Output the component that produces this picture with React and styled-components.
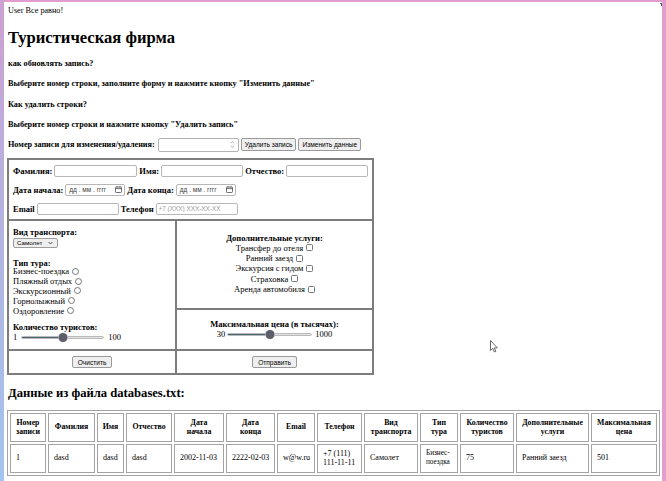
import React from 'react';
import styled, { createGlobalStyle } from 'styled-components';

const Global = createGlobalStyle`
  html, body { margin: 0; padding: 0; }
  body {
    width: 666px; height: 481px; overflow: hidden;
    font-family: "Liberation Serif", "Times New Roman", serif;
    color: #000;
  }
`;

const Desktop = styled.div`
  position: relative;
  width: 666px; height: 481px; box-sizing: border-box;
  padding: 2px 4px 0 4px;
  background:
    linear-gradient(to bottom, #cda0d2 0%, #b4b3e0 45%, #a2c4ee 100%) left top / 4px 100% no-repeat,
    #e29ccf;
`;

const Window = styled.div`
  position: relative;
  background: #fff;
  height: 100%;
  box-sizing: border-box;
  padding: 4px 3px 0 3px;
  overflow: hidden;
`;

const Grip = styled.span`
  position: absolute; right: 0; top: 1px;
  width: 3px; height: 3px;
  background: linear-gradient(225deg, #4a5a6a 0 50%, transparent 50%);
`;

const UserLine = styled.div`
  font-size: 8.2px; line-height: 10px; padding-left: 1px;
`;

const Title = styled.h1`
  font-size: 16.6px; line-height: 20px; margin: 12px 0 0; font-weight: bold; padding-left: 1px;
`;

const Hint = styled.h4`
  font-size: 8.25px; line-height: 10px; margin: 10.5px 0 0; font-weight: bold; padding-left: 1px;
`;

const RecordRow = styled.div`
  display: flex; align-items: center; height: 14px; margin-top: 7.5px; padding-left: 1px;
  font-size: 8.2px; font-weight: bold; white-space: nowrap;
`;

const NumberBox = styled.div`
  width: 81px; height: 14px; box-sizing: border-box; margin-left: 3px;
  border: 1px solid #b4b4b4; border-radius: 2px; background: #fff;
  display: flex; align-items: center; justify-content: flex-end; padding-right: 3px;
`;

const Btn = styled.button`
  height: 13px; box-sizing: border-box; margin: 0 0 0 2px; padding: 0 3px;
  font-family: "Liberation Sans", Arial, sans-serif; font-size: 6.6px; font-weight: normal;
  color: #000; background: #efefef; border: 1px solid #9a9a9a; border-radius: 2px;
  line-height: 11px; white-space: nowrap;
`;

const FormGrid = styled.div`
  width: 367px; box-sizing: border-box; margin-top: 6px;
  border: 1px solid #7d7d7d;
  display: grid;
  grid-template-columns: 168px 197px;
  grid-template-rows: 61px 89px 41px 24px;
`;

const Cell = styled.div`
  box-sizing: border-box; border: 1px solid #7d7d7d;
  grid-column: ${p => p.$col};
  grid-row: ${p => p.$row};
  display: flex; flex-direction: column;
  justify-content: ${p => (p.$top ? 'flex-start' : 'center')};
  align-items: ${p => (p.$center ? 'center' : 'flex-start')};
  padding: ${p => (p.$top ? '5px 4px' : '0 4px')};
  gap: ${p => p.$gap || 0}px;
  font-size: 8.5px;
`;

const FieldRow = styled.div`
  display: flex; align-items: center; height: 12px; column-gap: 2px; white-space: nowrap;
`;

const B = styled.span`
  font-weight: bold;
`;

const TextInput = styled.input`
  width: ${p => p.$w || 83}px; height: 12px; box-sizing: border-box; margin: 0;
  border: 1px solid #b7b7b7; border-radius: 2px; padding: 0 2px;
  font-family: "Liberation Sans", Arial, sans-serif; font-size: 6.4px; color: #000;
  &::placeholder { color: #9a9a9a; }
`;

const DateBox = styled.div`
  width: 60px; height: 12px; box-sizing: border-box;
  border: 1px solid #b7b7b7; border-radius: 2px; padding: 0 2px 0 3px;
  display: flex; align-items: center; justify-content: space-between;
  font-family: "Liberation Sans", Arial, sans-serif; font-size: 6.5px; color: #444;
`;

const SectionTitle = styled.div`
  font-weight: bold; line-height: ${p => p.$lh || 10}px; margin-top: ${p => p.$mt || 0}px;
  white-space: nowrap;
`;

const SelectBox = styled.div`
  width: 45px; height: 10px; box-sizing: border-box; margin-top: 1px;
  background: #efefef; border: 1px solid #9d9d9d; border-radius: 2px;
  display: flex; align-items: center; justify-content: space-between; padding: 0 4px 0 3px;
  font-family: "Liberation Sans", Arial, sans-serif; font-size: 6.2px; color: #000;
`;

const OptionRow = styled.div`
  display: flex; align-items: center; height: ${p => p.$h}px; white-space: nowrap; column-gap: 3px;
`;

const Radio = styled.span`
  width: 7px; height: 7px; box-sizing: border-box; border-radius: 50%;
  border: 1px solid #767676; background: #fff; display: inline-block;
`;

const Check = styled.span`
  width: 7px; height: 7px; box-sizing: border-box; border-radius: 1.5px;
  border: 1px solid #767676; background: #fff; display: inline-block;
`;

const SliderRow = styled.div`
  display: flex; align-items: center; height: 10px;
  white-space: nowrap;
`;

const Track = styled.div`
  position: relative; width: ${p => p.$w}px; height: 9px;
  margin: 0 ${p => p.$mr}px 0 ${p => p.$ml}px;
  display: flex; align-items: center;
`;

const Rail = styled.div`
  width: 100%; height: 3px; border-radius: 2px; box-sizing: border-box;
  background: linear-gradient(to right, #4b6575 0 50%, #e3e3e3 50% 100%);
  border: 0.5px solid #b9b9b9;
`;

const Thumb = styled.div`
  position: absolute; top: 0; left: 50%; transform: translateX(-50%);
  width: 9px; height: 9px; border-radius: 50%; background: #5d5e6c;
  box-shadow: 0 0 0 0.5px #e6e6e6;
`;

const SmallBtn = styled(Btn)`
  margin: 0; height: 12px; padding: 0 5px;
`;

const H2 = styled.h2`
  font-size: 12.6px; line-height: 15px; margin: 11.5px 0 0; font-weight: bold; padding-left: 1px;
`;

const DataTable = styled.table`
  margin-top: 8.5px;
  border: 1px solid #a3a3a3;
  border-spacing: 2px;
  table-layout: fixed;
  width: 653px;
  font-size: 8px;
  line-height: 9.5px;
  color: #000;
`;

const Th = styled.th`
  box-sizing: border-box; width: ${p => p.$w}px; height: 29px;
  border: 1px solid #a3a3a3; padding: 4px 2px; text-align: center; font-weight: bold;
  font-size: 7.8px;
`;

const Td = styled.td`
  box-sizing: border-box; height: 29px;
  border: 1px solid #a3a3a3; padding: 4px 5px; text-align: left; vertical-align: middle;
  white-space: nowrap; overflow: hidden;
  font-size: ${p => (p.$small ? 7.2 : 8)}px;
`;

const Cursor = styled.svg`
  position: absolute; left: 490px; top: 340px;
`;

const Calendar = () => (
  <svg width="7" height="7" viewBox="0 0 7 7">
    <rect x="0.5" y="1" width="6" height="5.5" rx="0.8" fill="none" stroke="#333" strokeWidth="0.7" />
    <line x1="0.5" y1="2.6" x2="6.5" y2="2.6" stroke="#333" strokeWidth="0.7" />
    <line x1="2" y1="0.2" x2="2" y2="1.4" stroke="#333" strokeWidth="0.7" />
    <line x1="5" y1="0.2" x2="5" y2="1.4" stroke="#333" strokeWidth="0.7" />
  </svg>
);

const Spinner = () => (
  <svg width="5" height="9" viewBox="0 0 5 9">
    <path d="M1 3.2 L2.5 1.6 L4 3.2" fill="none" stroke="#8a8a8a" strokeWidth="0.7" />
    <path d="M1 5.8 L2.5 7.4 L4 5.8" fill="none" stroke="#8a8a8a" strokeWidth="0.7" />
  </svg>
);

const Chevron = () => (
  <svg width="5" height="4" viewBox="0 0 5 4">
    <path d="M0.6 1 L2.5 3 L4.4 1" fill="none" stroke="#333" strokeWidth="0.8" />
  </svg>
);

const Slider = ({ min, max, w, ml, mr }) => (
  <SliderRow>
    {min}
    <Track $w={w} $ml={ml} $mr={mr}>
      <Rail />
      <Thumb />
    </Track>
    {max}
  </SliderRow>
);

const tours = ['Бизнес-поездка', 'Пляжный отдых', 'Экскурсионный', 'Горнолыжный', 'Оздоровление'];
const extras = ['Трансфер до отеля', 'Ранний заезд', 'Экскурсия с гидом', 'Страховка', 'Аренда автомобиля'];

const columns = [
  { t: ['Номер', 'записи'], w: 36 },
  { t: ['Фамилия'], w: 47 },
  { t: ['Имя'], w: 27 },
  { t: ['Отчество'], w: 46 },
  { t: ['Дата', 'начала'], w: 50 },
  { t: ['Дата', 'конца'], w: 49 },
  { t: ['Email'], w: 38 },
  { t: ['Телефон'], w: 45 },
  { t: ['Вид', 'транспорта'], w: 54 },
  { t: ['Тип', 'тура'], w: 38 },
  { t: ['Количество', 'туристов'], w: 54 },
  { t: ['Дополнительные', 'услуги'], w: 73 },
  { t: ['Максимальная', 'цена'], w: 66 },
];

const row = [
  { t: ['1'] }, { t: ['dasd'] }, { t: ['dasd'] }, { t: ['dasd'] },
  { t: ['2002-11-03'] }, { t: ['2222-02-03'] }, { t: ['w@w.ru'] },
  { t: ['+7 (111)', '111-11-11'] }, { t: ['Самолет'] }, { t: ['Бизнес-', 'поездка'], small: true },
  { t: ['75'] }, { t: ['Ранний заезд'] }, { t: ['501'] },
];

const Lines = ({ parts }) =>
  parts.map((p, i) => (
    <React.Fragment key={i}>
      {i > 0 && <br />}
      {p}
    </React.Fragment>
  ));

export default function App() {
  return (
    <Desktop>
      <Global />
      <Window>
        <Grip />
        <UserLine>User Все равно!</UserLine>
        <Title>Туристическая фирма</Title>
        <Hint>как обновлять запись?</Hint>
        <Hint>Выберите номер строки, заполните форму и нажмите кнопку "Изменить данные"</Hint>
        <Hint>Как удалить строки?</Hint>
        <Hint>Выберите номер строки и нажмите кнопку "Удалить запись"</Hint>
        <RecordRow>
          Номер записи для изменения/удаления:
          <NumberBox><Spinner /></NumberBox>
          <Btn>Удалить запись</Btn>
          <Btn>Изменить данные</Btn>
        </RecordRow>

        <FormGrid>
          <Cell $col="1 / 3" $row="1" $top $gap={7}>
            <FieldRow>
              <B>Фамилия:</B><TextInput />
              <B>Имя:</B><TextInput $w={82} />
              <B>Отчество:</B><TextInput $w={82} />
            </FieldRow>
            <FieldRow>
              <B>Дата начала:</B><DateBox>дд . мм . гггг <Calendar /></DateBox>
              <B>Дата конца:</B><DateBox>дд . мм . гггг <Calendar /></DateBox>
            </FieldRow>
            <FieldRow>
              <B>Email</B><TextInput $w={82} />
              <B>Телефон</B><TextInput $w={82} placeholder="+7 (XXX) XXX-XX-XX" />
            </FieldRow>
          </Cell>

          <Cell $col="1" $row="2 / 4">
            <SectionTitle>Вид транспорта:</SectionTitle>
            <SelectBox>Самолет <Chevron /></SelectBox>
            <SectionTitle $mt={11} $lh={8}>Тип тура:</SectionTitle>
            {tours.map(t => (
              <OptionRow key={t} $h={9.8}>{t}<Radio /></OptionRow>
            ))}
            <SectionTitle $mt={7}>Количество туристов:</SectionTitle>
            <Slider min="1" max="100" w={83} ml={4} mr={4} />
          </Cell>

          <Cell $col="2" $row="2" $center>
            <SectionTitle $lh={9}>Дополнительные услуги:</SectionTitle>
            {extras.map(t => (
              <OptionRow key={t} $h={10.4}>{t}<Check /></OptionRow>
            ))}
          </Cell>

          <Cell $col="2" $row="3" $center>
            <SectionTitle>Максимальная цена (в тысячах):</SectionTitle>
            <Slider min="30" max="1000" w={85} ml={2} mr={3} />
          </Cell>

          <Cell $col="1" $row="4" $center>
            <SmallBtn>Очистить</SmallBtn>
          </Cell>
          <Cell $col="2" $row="4" $center>
            <SmallBtn>Отправить</SmallBtn>
          </Cell>
        </FormGrid>

        <H2>Данные из файла databases.txt:</H2>
        <DataTable>
          <thead>
            <tr>
              {columns.map((c, i) => (
                <Th key={i} $w={c.w}><Lines parts={c.t} /></Th>
              ))}
            </tr>
          </thead>
          <tbody>
            <tr>
              {row.map((c, i) => (
                <Td key={i} $small={c.small}><Lines parts={c.t} /></Td>
              ))}
            </tr>
          </tbody>
        </DataTable>
      </Window>
      <Cursor width="8" height="13" viewBox="0 0 8 13">
        <path d="M0.5 0.5 L0.5 10.5 L2.8 8.4 L4.4 12 L5.8 11.4 L4.3 7.9 L7.3 7.9 Z" fill="#fff" stroke="#444" strokeWidth="0.8" strokeLinejoin="round" />
      </Cursor>
    </Desktop>
  );
}
